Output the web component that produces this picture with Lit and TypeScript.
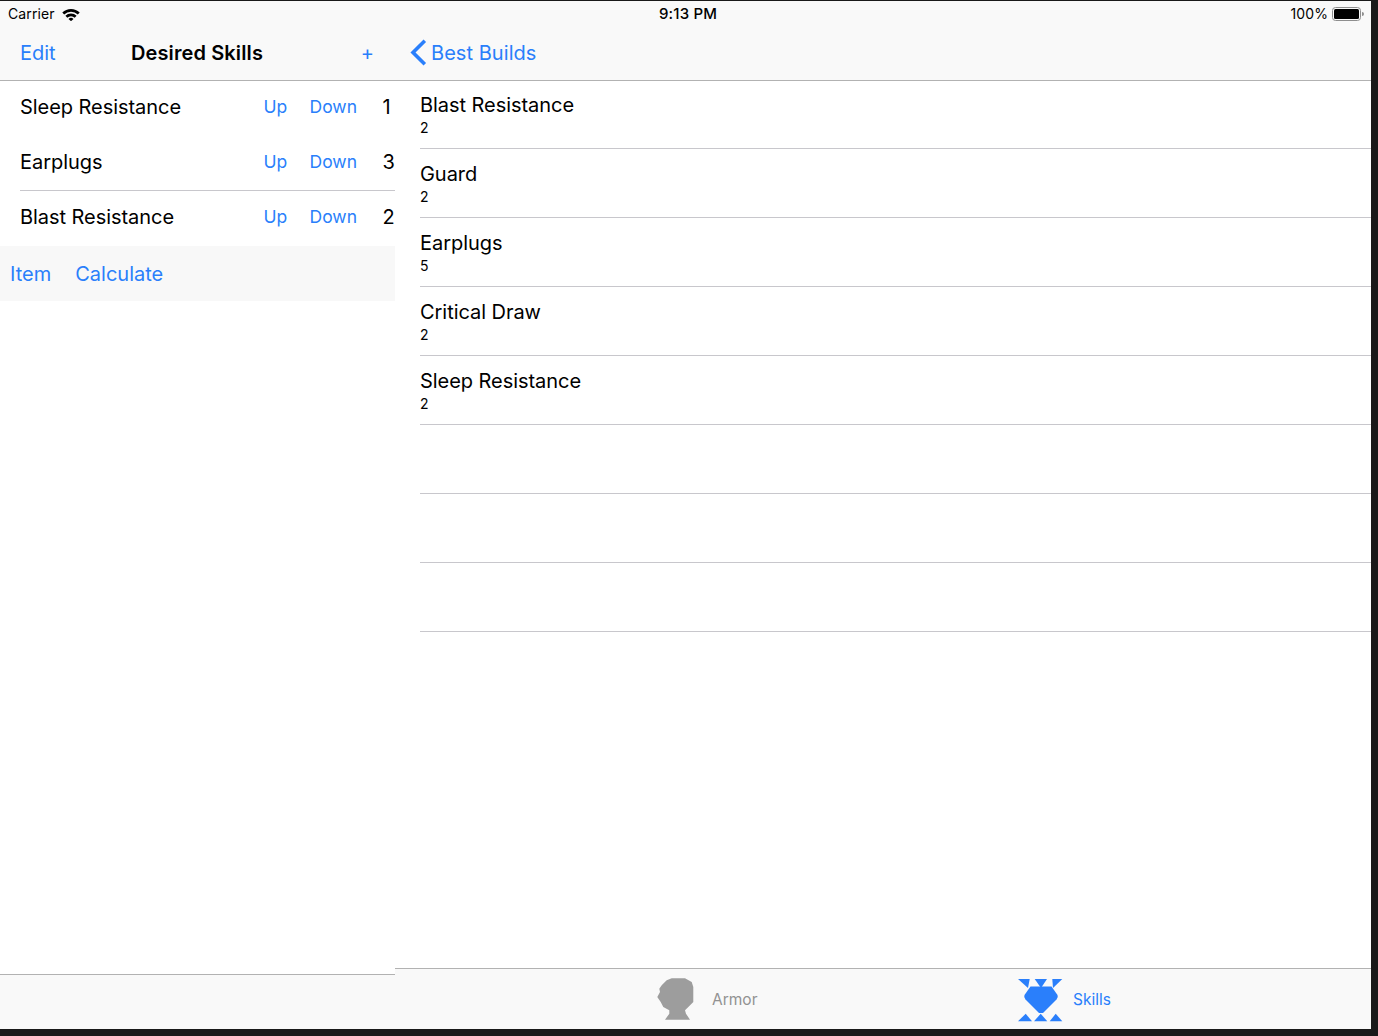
import { LitElement, html, css } from "lit";
import { customElement } from "lit/decorators.js";

const leftRows = [
  ["Sleep Resistance", "1"],
  ["Earplugs", "3"],
  ["Blast Resistance", "2"],
];
const rightRows = [
  ["Blast Resistance", "2"],
  ["Guard", "2"],
  ["Earplugs", "5"],
  ["Critical Draw", "2"],
  ["Sleep Resistance", "2"],
  ["", ""],
  ["", ""],
  ["", ""],
];

@customElement("app-root")
export class AppRoot extends LitElement {
  static styles = css`
    :host {
      display: block;
      width: 1378px;
      height: 1036px;
      background: #191919;
      font-family: Inter, "Liberation Sans", sans-serif;
      color: #000;
      overflow: hidden;
    }
    .screen {
      width: 1371px;
      height: 1028px;
      margin-top: 1px;
      background: #fff;
      display: flex;
      flex-direction: column;
    }
    .status {
      height: 26px;
      flex: none;
      background: #f9f9f9;
      display: grid;
      grid-template-columns: 1fr auto 1fr;
      align-items: center;
      font-size: 14px;
      letter-spacing: 0.1px;
      padding: 0 7px 0 8px;
      box-sizing: border-box;
      line-height: 26px;
    }
    .st-left { display: flex; align-items: center; gap: 7px; }
    .st-mid { font-weight: 500; font-size: 15px; letter-spacing: 0.15px; padding-left: 4px; }
    .st-right { display: flex; justify-content: flex-end; align-items: center; gap: 4px; }
    .panes { flex: 1; display: flex; min-height: 0; }
    .left { width: 395px; flex: none; display: flex; flex-direction: column; }
    .right { flex: 1; display: flex; flex-direction: column; min-width: 0; }
    .nav {
      height: 54px;
      flex: none;
      box-sizing: border-box;
      background: #f9f9f9;
      border-bottom: 1px solid #b2b2b2;
      display: flex;
      align-items: center;
      font-size: 20px;
      padding-bottom: 2px;
    }
    .blue { color: #2a7ffb; }
    .nav-left {
      display: grid;
      grid-template-columns: 1fr auto 1fr;
      padding-left: 20px;
      padding-right: 21px;
    }
    .title { font-weight: 600; font-size: 20px; letter-spacing: 0.12px; }
    .plus { justify-self: end; }
    .nav-right { padding-left: 15px; gap: 4px; }
    .best { letter-spacing: 0.05px; }
    .lrow {
      height: 55px;
      margin-left: 20px;
      padding-bottom: 2px;
      display: flex;
      align-items: center;
      box-sizing: border-box;
      font-size: 20px;
      letter-spacing: -0.05px;
      border-bottom: 1px solid transparent;
    }
    .lrow.sep { border-bottom-color: #c8c7cc; }
    .lname { flex: 1; }
    .btn { font-size: 17.5px; letter-spacing: 0; padding-bottom: 1px; }
    .up { width: 46px; }
    .down { width: 73px; }
    .num { width: 12.5px; white-space: nowrap; letter-spacing: 0; }
    .toolbar {
      height: 55px;
      box-sizing: border-box;
      background: #f8f8f8;
      display: flex;
      align-items: center;
      gap: 24px;
      padding-left: 10px;
      font-size: 20px;
      flex: none;
    }
    .spacer { flex: 1; }
    .left-foot {
      height: 55px;
      flex: none;
      background: #f9f9f9;
      border-top: 1px solid #b2b2b2;
      box-sizing: border-box;
    }
    .list { flex: 1; padding-left: 25px; }
    .rrow {
      height: 69px;
      box-sizing: border-box;
      border-bottom: 1px solid #c8c7cc;
      display: flex;
      flex-direction: column;
      padding-top: 12px;
    }
    .rrow:first-child { height: 68px; padding-top: 11px; }
    .rname { font-size: 20px; line-height: 26px; height: 26px; letter-spacing: -0.05px; }
    .rval { font-size: 14px; line-height: 20px; }
    .tabbar {
      height: 61px;
      flex: none;
      box-sizing: border-box;
      background: #f9f9f9;
      border-top: 1px solid #b2b2b2;
      display: flex;
      align-items: center;
      padding-left: 262px;
      font-size: 15.5px;
    }
    .tab { display: flex; align-items: center; }
    .armor { color: #929292; gap: 18px; width: 361px; }
    .skills { color: #2a7ffb; gap: 10px; }
    svg { display: block; flex: none; }
    .skills svg { margin-top: 2px; }
  `;

  render() {
    return html`<div class="screen">
      <div class="status">
        <div class="st-left">
          <span>Carrier</span>
          <svg width="18" height="13" viewBox="0 0 18 13">
            <path d="M0.3 4.6 A12.5 12.5 0 0 1 17.7 4.6 L15.8 6.6 A9.8 9.8 0 0 0 2.2 6.6 Z" fill="#000" />
            <path d="M3.4 7.8 A8 8 0 0 1 14.6 7.8 L12.7 9.7 A5.3 5.3 0 0 0 5.3 9.7 Z" fill="#000" />
            <path d="M6.5 10.9 A3.6 3.6 0 0 1 11.5 10.9 L9 13.2 Z" fill="#000" />
          </svg>
        </div>
        <div class="st-mid">9:13 PM</div>
        <div class="st-right">
          <span>100%</span>
          <svg width="32" height="14" viewBox="0 0 32 14">
            <rect x="0.5" y="0.5" width="28" height="13" rx="3" fill="none" stroke="#8e8e8e" />
            <rect x="2" y="2" width="25" height="10" rx="1.5" fill="#000" />
            <path d="M30 5 a2 2 0 0 1 0 4 Z" fill="#8e8e8e" />
          </svg>
        </div>
      </div>
      <div class="panes">
        <div class="left">
          <div class="nav nav-left">
            <span class="blue">Edit</span>
            <span class="title">Desired Skills</span>
            <span class="blue plus">+</span>
          </div>
          ${leftRows.map(
            ([n, v], i) => html`<div class="lrow ${i === 1 ? "sep" : ""}">
              <span class="lname">${n}</span>
              <span class="btn blue up">Up</span>
              <span class="btn blue down">Down</span>
              <span class="num">${v}</span>
            </div>`
          )}
          <div class="toolbar blue"><span>Item</span><span>Calculate</span></div>
          <div class="spacer"></div>
          <div class="left-foot"></div>
        </div>
        <div class="right">
          <div class="nav nav-right blue">
            <svg width="17" height="27" viewBox="0 0 17 27">
              <path d="M14.8 1.8 L3 13.5 L14.8 25.2" fill="none" stroke="#2a7ffb" stroke-width="3.6" />
            </svg>
            <span class="best">Best Builds</span>
          </div>
          <div class="list">
            ${rightRows.map(
              ([n, v]) => html`<div class="rrow">
                <div class="rname">${n}</div>
                <div class="rval">${v}</div>
              </div>`
            )}
          </div>
          <div class="tabbar">
            <div class="tab armor">
              <svg width="37" height="42" viewBox="0 0 37 42">
                <path
                  d="M9.7 2.3 L14.7 .3 L28 .3 L34.7 4 L36.3 9 L36.3 24 L31.3 29 L28 32.3 L29 35.7 L33 41.7 L8 41.7 L12.3 35.7 L12.3 32.3 L6.3 29 L3.7 24 L.3 19 L3 14 L2.3 10.7 L4.7 7.3 Z"
                  fill="#9d9d9d"
                />
              </svg>
              <span>Armor</span>
            </div>
            <div class="tab skills">
              <svg width="45" height="43" viewBox="0 0 45 43">
                <g fill="#2a7ffb">
                  <path d="M0 0 L11.7 0 L10 9 Z" />
                  <path d="M16.7 0 L29 0 L23 9 Z" />
                  <path d="M34.3 0 L44.3 0 L35 9 Z" />
                  <path d="M12.5 7.5 L33.5 7.5 L39.5 16 Q40.5 18 38.5 20.5 L25 34 L21 34 L7.5 20.5 Q5.5 18 6.5 16 Z" />
                  <path d="M0 42.3 L14 42.3 L7.7 34.7 Z" />
                  <path d="M16 42.3 L29.3 42.3 L22.7 34.7 Z" />
                  <path d="M31.7 42.3 L44.3 42.3 L37.7 34.7 Z" />
                </g>
              </svg>
              <span>Skills</span>
            </div>
          </div>
        </div>
      </div>
    </div>`;
  }
}
